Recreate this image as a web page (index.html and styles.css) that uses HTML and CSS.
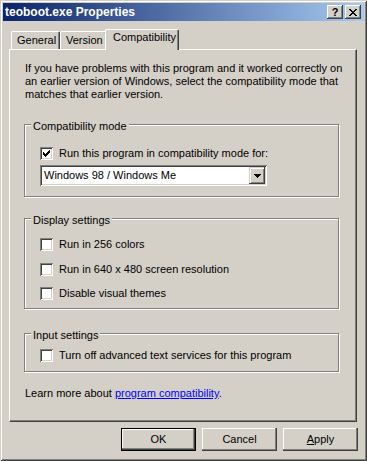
FILE: index.html
```html
<!DOCTYPE html>
<html lang="en">
<head>
    <meta charset="UTF-8">
    <title>teoboot.exe Properties</title>
    <link rel="stylesheet" href="styles.css">
</head>
<body>
    <div class="window">
        <div class="titlebar">
            <span class="title">teoboot.exe Properties</span>
            <div class="caption-btn help">?</div>
            <div class="caption-btn close">
                <svg width="8" height="7" viewBox="0 0 8 7" shape-rendering="crispEdges">
                    <path d="M0 0h2v1h-2z M6 0h2v1h-2z M1 1h2v1h-2z M5 1h2v1h-2z M2 2h4v1h-4z M3 3h2v1h-2z M2 4h4v1h-4z M1 5h2v1h-2z M5 5h2v1h-2z M0 6h2v1h-2z M6 6h2v1h-2z" fill="#000"/>
                </svg>
            </div>
        </div>

        <div class="tabs">
            <div class="tab tab-general">General</div>
            <div class="tab tab-version">Version</div>
            <div class="tab tab-compat selected">Compatibility</div>
        </div>

        <div class="panel">
            <p class="intro">If you have problems with this program and it worked correctly on<br>an earlier version of Windows, select the compatibility mode that<br>matches that earlier version.</p>

            <div class="group group-mode">
                <div class="group-title">Compatibility mode</div>
                <div class="check-row first">
                    <span class="checkbox">
                        <svg width="13" height="13" viewBox="0 0 13 13" shape-rendering="crispEdges">
                            <path d="M9 3h1v1h-1z M8 4h2v1h-2z M3 5h1v1h-1z M7 5h3v1h-3z M3 6h2v1h-2z M6 6h3v1h-3z M3 7h5v1h-5z M4 8h3v1h-3z M5 9h1v1h-1z" fill="#000"/>
                        </svg>
                    </span>
                    <span>Run this program in compatibility mode for:</span>
                </div>
                <div class="combo">
                    <span class="combo-text">Windows 98 / Windows Me</span>
                    <span class="combo-btn">
                        <svg width="7" height="4" viewBox="0 0 7 4" shape-rendering="crispEdges">
                            <path d="M0 0h7v1h-7z M1 1h5v1h-5z M2 2h3v1h-3z M3 3h1v1h-1z" fill="#000"/>
                        </svg>
                    </span>
                </div>
            </div>

            <div class="group group-display">
                <div class="group-title">Display settings</div>
                <div class="check-row first">
                    <span class="checkbox"></span>
                    <span>Run in 256 colors</span>
                </div>
                <div class="check-row second">
                    <span class="checkbox"></span>
                    <span>Run in 640 x 480 screen resolution</span>
                </div>
                <div class="check-row third">
                    <span class="checkbox"></span>
                    <span>Disable visual themes</span>
                </div>
            </div>

            <div class="group group-input">
                <div class="group-title">Input settings</div>
                <div class="check-row first">
                    <span class="checkbox"></span>
                    <span>Turn off advanced text services for this program</span>
                </div>
            </div>

            <p class="learn">Learn more about <a href="#">program compatibility</a>.</p>
        </div>

        <div class="buttons">
            <button class="btn default">OK</button>
            <button class="btn">Cancel</button>
            <button class="btn"><u>A</u>pply</button>
        </div>
    </div>
</body>
</html>
```

FILE: styles.css
```css
body { margin: 0; font-family: "Liberation Sans", Arial, sans-serif; font-size: 11px; line-height: 13px; color: #000; }

/* window frame */
.window { width: 367px; height: 461px; box-sizing: border-box; padding: 3px; background: #d4d0c8;
    box-shadow: inset 1px 1px #d4d0c8, inset -1px -1px #404040, inset 2px 2px #fff, inset -2px -2px #808080; }
.titlebar { height: 18px; display: flex; align-items: center; padding-left: 2px; background: linear-gradient(to right, #0a246a, #a6caf0); }
.title { flex: 1; color: #fff; font-weight: bold; font-size: 12px; line-height: 18px; }
.caption-btn { width: 16px; height: 14px; box-sizing: border-box; display: flex; align-items: center; justify-content: center; background: #d4d0c8;
    box-shadow: inset -1px -1px #404040, inset 1px 1px #fff, inset -2px -2px #808080; font-weight: bold; font-size: 11px; line-height: 12px; }
.help { margin-right: 2px; }
.close { margin-right: 3px; }

/* tabs */
.tabs { height: 28px; display: flex; align-items: flex-end; padding-left: 8px; }
.tab { height: 18px; box-sizing: border-box; padding: 2px 0 0 5px; border-top: 1px solid #fff; border-left: 1px solid #fff; border-right: 1px solid #404040;
    border-radius: 2px 2px 0 0; box-shadow: inset -1px 0 #808080; background: #d4d0c8; }
.tab-general { width: 49px; }
.tab-version { width: 47px; }
.tab-compat { width: 74px; }
.tab.selected { height: 21px; margin: 0 -2px -1px; padding: 1px 0 0 7px; position: relative; z-index: 1; }

/* tab page */
.panel { height: 373px; box-sizing: border-box; margin: 0 7px 0 6px; padding-top: 12px; border-top: 1px solid #fff; border-left: 1px solid #fff;
    border-right: 1px solid #404040; border-bottom: 1px solid #404040; box-shadow: inset -1px -1px #808080; }
.intro { margin: 0 0 0 15px; }

.group { width: 315px; box-sizing: border-box; margin-left: 14px; border: 1px solid #808080; box-shadow: inset 1px 1px #fff, 1px 1px #fff; }
.group-title { width: fit-content; margin: -5px 0 0 6px; padding: 0 2px; background: #d4d0c8; }
.group-mode { margin-top: 23px; padding-bottom: 10px; }
.group-mode .first { margin-top: 14px; }
.group-display { margin-top: 21px; padding-bottom: 8px; }
.group-display .first { margin-top: 11px; }
.group-display .second { margin-top: 12px; }
.group-display .third { margin-top: 11px; }
.group-input { margin-top: 24px; padding-bottom: 9px; }
.group-input .first { margin-top: 7px; }

.check-row { display: flex; align-items: center; height: 13px; margin-left: 15px; }
.checkbox { width: 13px; height: 13px; box-sizing: border-box; margin-right: 6px; background: #fff; display: block;
    box-shadow: inset 1px 1px #808080, inset -1px -1px #fff, inset 2px 2px #404040, inset -2px -2px #d4d0c8; }
.checkbox svg { display: block; }

.combo { width: 227px; height: 21px; box-sizing: border-box; margin: 5px 0 0 15px; padding: 2px; display: flex; background: #fff;
    box-shadow: inset 1px 1px #808080, inset -1px -1px #fff, inset 2px 2px #404040, inset -2px -2px #d4d0c8; }
.combo-text { flex: 1; padding-left: 2px; line-height: 17px; }
.combo-btn { width: 16px; height: 17px; display: flex; align-items: center; justify-content: center; background: #d4d0c8;
    box-shadow: inset -1px -1px #404040, inset 1px 1px #d4d0c8, inset 2px 2px #fff, inset -2px -2px #808080; }

.learn { margin: 15px 0 0 15px; }
.learn a { color: #0000ff; }

/* dialog buttons */
.buttons { display: flex; justify-content: flex-end; gap: 6px; margin-top: 6px; padding-right: 6px; }
.btn { width: 75px; height: 23px; box-sizing: border-box; padding: 0; border: 0; background: #d4d0c8; color: #000;
    font: inherit; box-shadow: inset -1px -1px #404040, inset -2px -2px #808080, inset 1px 1px #fff; }
.btn.default { box-shadow: inset 0 0 0 1px #000, inset -2px -2px #404040, inset -3px -3px #808080, inset 2px 2px #fff; }
```
